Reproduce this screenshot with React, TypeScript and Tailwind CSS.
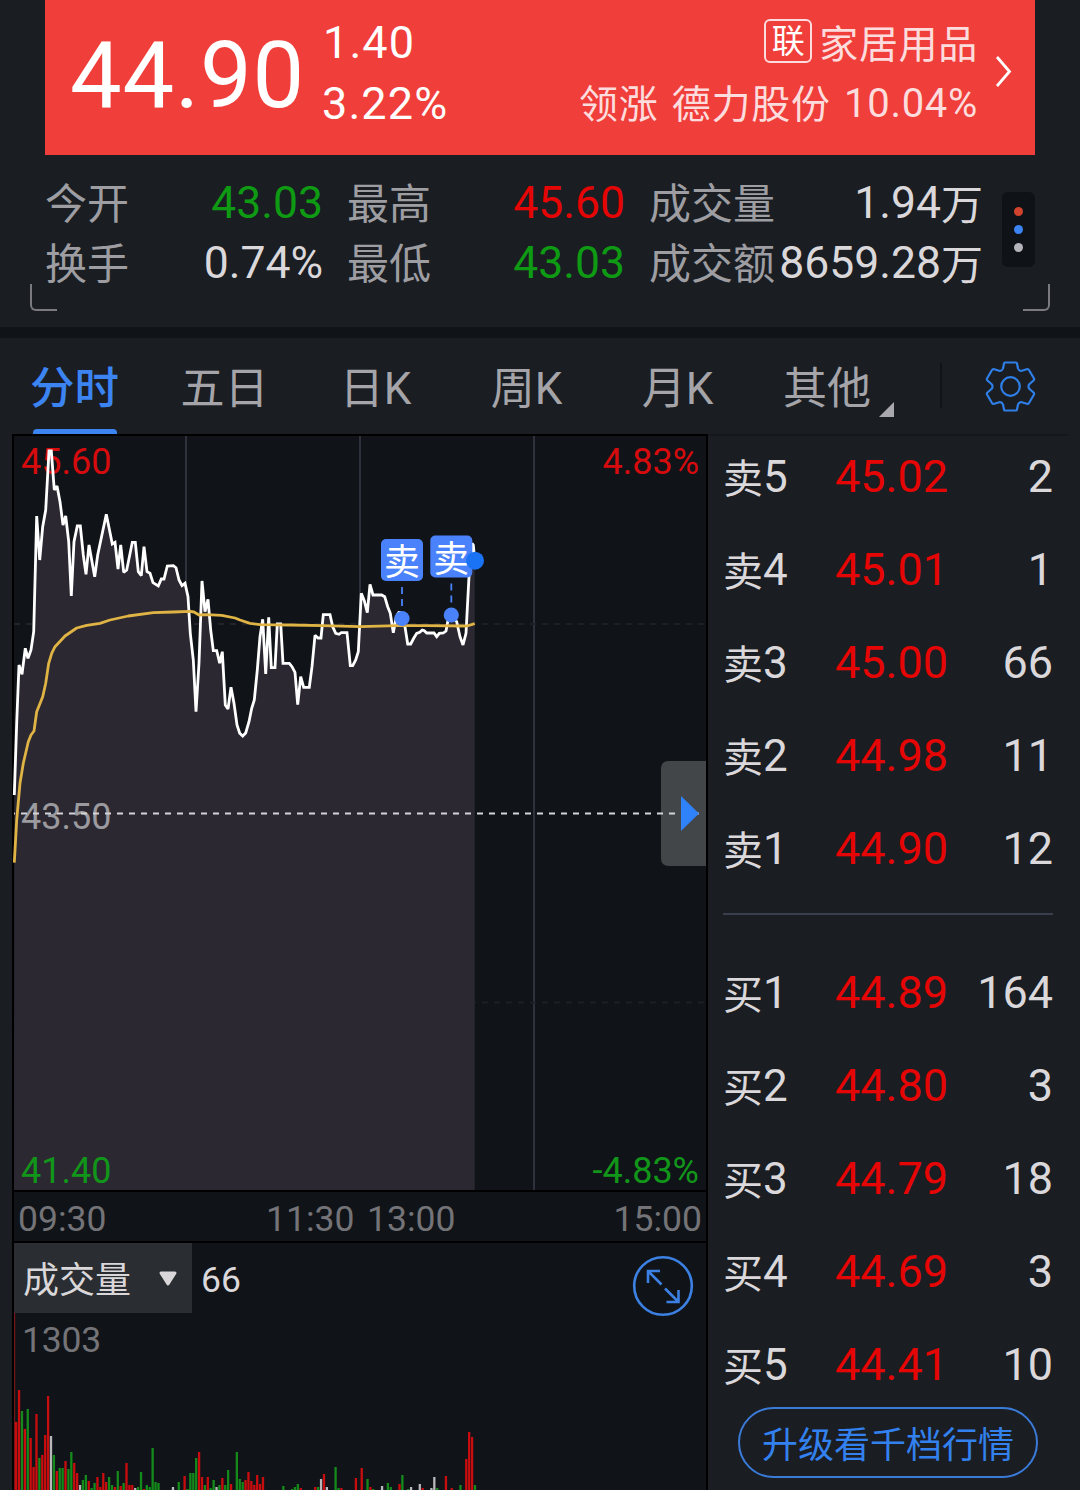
type Level = { label: string; level: number; price: string; volume: string }

const sells: Level[] = [
  { label: '卖', level: 5, price: '45.02', volume: '2' },
  { label: '卖', level: 4, price: '45.01', volume: '1' },
  { label: '卖', level: 3, price: '45.00', volume: '66' },
  { label: '卖', level: 2, price: '44.98', volume: '11' },
  { label: '卖', level: 1, price: '44.90', volume: '12' },
]

const buys: Level[] = [
  { label: '买', level: 1, price: '44.89', volume: '164' },
  { label: '买', level: 2, price: '44.80', volume: '3' },
  { label: '买', level: 3, price: '44.79', volume: '18' },
  { label: '买', level: 4, price: '44.69', volume: '3' },
  { label: '买', level: 5, price: '44.41', volume: '10' },
]

const stats = [
  { label: '今开', value: '43.03', color: 'text-[#0f9a14]' },
  { label: '最高', value: '45.60', color: 'text-[#e60505]' },
  { label: '成交量', value: '1.94', unit: '万', color: 'text-[#dad8da]' },
  { label: '换手', value: '0.74%', color: 'text-[#dad8da]' },
  { label: '最低', value: '43.03', color: 'text-[#0f9a14]' },
  { label: '成交额', value: '8659.28', unit: '万', color: 'text-[#dad8da]' },
]

const tabs = ['五日', '日K', '周K', '月K']

const priceLine =
  '14.3,795 16.7,723 19,665 22,674.3 25.3,648.3 28,658.3 31,650 33.7,631.7 36.7,516 39.7,560 42.7,526.7 45.7,510 49,451 51.3,451 54.3,490 57,486 60,501.7 63,525 65.7,516 68.7,541.7 71.3,596 74,541.7 77.3,526 80.3,526 83.3,555 86,574.3 89,545 94.7,576.7 97.7,555 106.3,514.3 112.3,544 115,542.3 118,569 120.7,545 123.7,572.3 126.7,570 132.3,542.3 135.3,542.3 138.3,571.7 141.3,575.7 144,546.7 147,571.7 150,573.3 153,582.7 158.3,586 161.3,579 164,579 167.3,566 173.3,565.7 176,567.7 179,580 182,585.7 185,583.3 188,596.7 190.3,633.3 193.3,660 196,711.7 199,663.3 202,581 205,611.7 208,599.3 210.7,630 213.3,650.7 216.7,650.7 219.7,663.3 222.3,651.7 225.3,705 228,709 231,687.3 234,703.3 237,725 239.7,733.3 242.7,736 245.7,733 249,721.7 251.7,708.3 254.3,700 257.3,670 260,636.7 262.7,619.3 265.7,674 268.7,617.3 271.3,667.7 275,667.7 277.3,624 280.7,624 283,663.3 289.3,663.3 292,666.7 295,672.3 297.7,704.7 300.7,676.7 303.7,687.3 309.3,687.3 312,666.7 315,635.3 318,638 321,638 323.3,614.7 330,614.7 332.7,626.7 335.7,633.3 339,634.3 341.3,632.7 347,632.7 350.3,665.7 352.7,665.7 355.7,660 358.3,651.7 361.3,593.3 364.3,600.7 367.3,612.7 370,584.3 373,595 381.7,595 384.7,596.7 387.7,606.7 390.3,613.3 393.3,632.7 396.3,616.7 399.3,611.7 402,617.3 405,626.7 407.7,644 410.7,644 413.7,638.3 416.7,633.3 419.7,632.3 422.3,630 424.3,630.7 426.7,633 434,633 436.7,636.7 439.3,633.3 443.3,633 446,631 449,615 451.3,613.3 456.7,621.7 460,636.7 463,645 466,633.3 469,576.7 472,543.3 473.3,545 474.7,560'

const averageLine =
  '14.3,862.7 16.7,820 20,783.3 23.3,763.3 28.3,741.7 31,735 34,731 36.7,711.7 42.7,696.7 45.7,683.3 48.7,663.3 51.7,653.3 55,646.7 65,636 76.7,628 86.7,625.3 100,623.3 110,620 128.3,616 153.3,612.7 173.3,612 190,611.3 194,612 199,615 206.7,614.7 221.7,615.3 235,618 240,620 250,623.3 260,624.7 290,625 323,625.7 360,626.7 397,625.7 427,625.7 467,626 474.7,623.7'

const barColors = { r: '#c90c0e', g: '#148a1a', w: '#b9b7ba' }

// minute index, height, colour
const bars: [number, number, 'r' | 'g' | 'w'][] = [
  [0, 68, 'r'], [1, 100, 'r'], [2, 79, 'g'], [3, 61, 'r'], [4, 81, 'g'], [5, 52, 'r'], [6, 23, 'r'], [7, 76, 'r'],
  [8, 32, 'g'], [9, 35, 'r'], [10, 55, 'r'], [11, 94, 'r'], [12, 54, 'w'], [13, 35, 'g'], [14, 19, 'r'], [15, 22, 'g'],
  [16, 22, 'g'], [17, 29, 'r'], [18, 21, 'g'], [19, 38, 'g'], [20, 27, 'r'], [21, 17, 'r'], [22, 5, 'w'], [23, 10, 'g'],
  [24, 15, 'g'], [25, 9, 'r'], [26, 2, 'g'], [27, 7, 'g'], [28, 13, 'r'], [29, 3, 'r'], [30, 17, 'r'], [31, 8, 'r'],
  [32, 13, 'g'], [33, 5, 'g'], [34, 3, 'r'], [35, 19, 'g'], [36, 4, 'r'], [37, 7, 'g'], [38, 27, 'r'], [39, 5, 'r'],
  [40, 5, 'r'], [41, 2, 'w'], [42, 3, 'g'], [43, 18, 'g'], [44, 1, 'r'], [45, 5, 'g'], [46, 3, 'g'], [47, 42, 'g'],
  [48, 8, 'g'], [49, 7, 'g'], [54, 3, 'w'], [56, 8, 'g'], [58, 14, 'r'], [59, 1, 'g'], [60, 17, 'g'], [61, 17, 'g'],
  [62, 32, 'g'], [63, 38, 'r'], [64, 13, 'r'], [65, 5, 'g'], [66, 13, 'r'], [67, 2, 'g'], [68, 10, 'g'], [69, 3, 'w'],
  [70, 5, 'g'], [71, 12, 'r'], [72, 5, 'g'], [73, 20, 'g'], [74, 6, 'r'], [76, 38, 'g'], [77, 11, 'g'], [78, 8, 'g'],
  [79, 10, 'r'], [80, 18, 'r'], [81, 9, 'r'], [82, 5, 'r'], [83, 15, 'r'], [84, 6, 'r'], [85, 13, 'r'], [92, 4, 'g'],
  [95, 1, 'g'], [96, 3, 'g'], [97, 6, 'g'], [98, 2, 'r'], [103, 3, 'r'], [104, 3, 'g'], [105, 11, 'w'], [106, 16, 'r'],
  [107, 3, 'w'], [110, 23, 'g'], [111, 2, 'g'], [112, 2, 'r'], [117, 12, 'r'], [119, 22, 'r'], [121, 11, 'g'],
  [122, 3, 'r'], [123, 1, 'g'], [126, 4, 'w'], [128, 7, 'g'], [129, 3, 'g'], [132, 6, 'r'], [133, 15, 'g'],
  [135, 1, 'g'], [136, 3, 'w'], [139, 6, 'w'], [140, 2, 'r'], [143, 2, 'w'], [144, 13, 'w'], [145, 2, 'g'],
  [148, 14, 'r'], [150, 2, 'r'], [153, 5, 'g'], [155, 31, 'r'], [156, 58, 'r'], [157, 53, 'r'], [158, 5, 'g'],
]

function QuoteHeader() {
  return (
    <div className="mx-[45px] flex h-[155px] bg-[#f03e3b] text-white">
      <div className="ml-[25px] w-[252px] text-[92px] leading-[151px] tracking-[0.8px]">44.90</div>
      <div className="pt-[13px] text-[45px] leading-[60px] tracking-[1.1px]">
        <div className="pl-px">1.40</div>
        <div className="pt-px">3.22%</div>
      </div>
      <div className="ml-auto flex flex-col items-end pt-[15px] text-[39px] leading-[60px] tracking-[0.7px] text-[#fcdcdc]">
        <div className="flex items-center">
          <span className="mr-[7px] mt-[-9px] flex h-[44px] w-[48px] items-center justify-center rounded-md border-2 border-[#fcdcdc] pt-[2px] text-[33px] leading-none tracking-normal text-white">
            联
          </span>
          家居用品
        </div>
        <div className="[word-spacing:3px]">
          领涨 德力股份 <span className="align-[1px] text-[40px] leading-none">10.04%</span>
        </div>
      </div>
      <svg className="ml-[17px] mr-[23px] mt-[55px] h-[33px] w-[17px]" viewBox="0 0 17 33" fill="none" stroke="#fff" strokeWidth="2.8">
        <path d="M2 2 L14.5 16.5 L2 31" />
      </svg>
    </div>
  )
}

function Stats() {
  return (
    <div className="relative h-[172px] pl-[45px] pt-[18px]">
      <div className="flex">
        <div className="grid auto-rows-[60px] grid-cols-[278px_278px_334px] gap-x-6 text-[44.5px] leading-[60px]">
          {stats.map((item) => (
            <div key={item.label} className="flex justify-between whitespace-nowrap">
              <span className="pt-[2px] text-[42px] text-[#9d9da2]">{item.label}</span>
              <span className={item.color}>
                {item.value}
                {item.unit && <span className="align-[-2px] text-[42px] leading-none">{item.unit}</span>}
              </span>
            </div>
          ))}
        </div>
        <div className="ml-[19px] mt-[19px] flex h-[75px] w-[33px] flex-col items-center justify-center gap-[9px] rounded-md bg-[#0f1216]">
          <i className="size-[9px] rounded-full bg-[#d2432e]" />
          <i className="size-[9px] rounded-full bg-[#3b84f2]" />
          <i className="size-[9px] rounded-full bg-[#b5b3bb]" />
        </div>
      </div>
      <i className="absolute bottom-[16px] left-[30px] h-[27px] w-[27px] rounded-bl-md border-b-[2.5px] border-l-[2.5px] border-[#7b7a7e]" />
      <i className="absolute bottom-[16px] right-[30px] h-[27px] w-[27px] rounded-br-md border-b-[2.5px] border-r-[2.5px] border-[#7b7a7e]" />
    </div>
  )
}

function Tabs() {
  return (
    <div className="flex h-[96px] text-[44px] leading-[102px] text-[#a4a4a9]">
      <div className="flex w-[149px] flex-col items-center text-[44.5px] font-medium text-[#3b84f2]">
        <span className="h-[91px]">分时</span>
        <i className="h-[5px] w-[84px] rounded-t-sm bg-[#3b84f2]" />
      </div>
      {tabs.map((tab) => (
        <div key={tab} className="w-[151px] text-center">
          {tab}
        </div>
      ))}
      <div className="flex w-[151px] pl-[30px]">
        其他
        <svg className="ml-[8px] mt-[64px] size-[15px]" viewBox="0 0 15 15">
          <path d="M15 0 V15 H0 Z" fill="#a9a9ad" />
        </svg>
      </div>
      <i className="ml-[36px] mt-[25px] h-[45px] w-[2px] bg-[#101317]" />
      <svg
        className="ml-[43px] mt-[23px] h-[51px] w-[51px]"
        viewBox="-25.5 -25.5 51 51"
        fill="none"
        stroke="#2f7fe8"
        strokeWidth="2.2"
        strokeLinejoin="round"
      >
        <circle r="9.3" />
        <path d="M-5.5 -24 H5.5 Q6.3 -24 6.5 -23 L7.5 -18 Q8.2 -16 10.5 -15.5 L17 -17.5 Q18 -17.5 18.5 -16.5 L23.5 -8 Q24 -7 23 -6 L18.5 -2 Q17.5 0 18.5 2 L23 6 Q24 7 23.5 8 L18.5 16.5 Q18 17.5 17 17.5 L10.5 15.5 Q8.2 16 7.5 18 L6.5 23 Q6.3 24 5.5 24 H-5.5 Q-6.3 24 -6.5 23 L-7.5 18 Q-8.2 16 -10.5 15.5 L-17 17.5 Q-18 17.5 -18.5 16.5 L-23.5 8 Q-24 7 -23 6 L-18.5 2 Q-17.5 0 -18.5 -2 L-23 -6 Q-24 -7 -23.5 -8 L-18.5 -16.5 Q-18 -17.5 -17 -17.5 L-10.5 -15.5 Q-8.2 -16 -7.5 -18 L-6.5 -23 Q-6.3 -24 -5.5 -24 Z" />
      </svg>
    </div>
  )
}

function SellMarker({ x, y, dotY }: { x: number; y: number; dotY: number }) {
  return (
    <g>
      <rect x={x - 21} y={y} width="42" height="42" rx="5" fill="#4a82fb" />
      <text x={x} y={y + 36} fontSize="36" textAnchor="middle" fill="#fff">
        卖
      </text>
      <path d={`M${x} ${y + 48} V${dotY - 8}`} stroke="#4a82fb" strokeWidth="1.8" strokeDasharray="7 5" />
      <circle cx={x} cy={dotY} r="7.6" fill="#4a82fb" />
    </g>
  )
}

function PriceChart() {
  return (
    <svg className="block h-[754px] w-[692px] overflow-visible" viewBox="14 436 692 754" fill="none" fontSize="36">
      <path d="M186 436 V1190 M360 436 V1190 M534 436 V1190" stroke="#2e313b" strokeWidth="2" />
      <path d="M14 624 H706 M14 1002.500 H706" stroke="#1d1f23" strokeWidth="2" strokeDasharray="6 6" />
      <polygon points={`14,1190 ${priceLine} 474.7,1190`} fill="#2b2832" />
      <path d="M14 624 H474" stroke="#302b32" strokeWidth="2" strokeDasharray="6 6" opacity="0.4" />
      <text x="21" y="473.500" fill="#d60b0e">45.60</text>
      <text x="699" y="473.500" fill="#d60b0e" textAnchor="end">4.83%</text>
      <text x="21" y="828.500" fill="#9b9a9e">43.50</text>
      <text x="21" y="1182.500" fill="#11961a">41.40</text>
      <text x="699" y="1182.500" fill="#11961a" textAnchor="end">-4.83%</text>
      <path d="M661 769 Q661 761 669 761 H706 V866 H669 Q661 866 661 858 Z" fill="#434649" />
      <path d="M14 813.500 H703" stroke="#d4d3d6" strokeWidth="2" strokeDasharray="6 6" strokeDashoffset="5" />
      <path d="M681 796 V831 L699 813.500 Z" fill="#2f82f7" />
      <polyline points={priceLine} stroke="#fff" strokeWidth="2.8" strokeLinejoin="miter" strokeMiterlimit="2" />
      <polyline points={averageLine} stroke="#dfb445" strokeWidth="2.8" strokeLinejoin="round" />
      <SellMarker x={402} y={539} dotY={618.5} />
      <SellMarker x={451.3} y={535.5} dotY={615} />
      <circle cx="475" cy="560.700" r="9" fill="#1a73f5" />
    </svg>
  )
}

function TimeAxis() {
  return (
    <div className="flex h-[49px] px-[4px] text-[35.5px] leading-[55px] text-[#747377]">
      <span className="w-[248px]">09:30</span>
      <span className="w-[101px]">11:30</span>
      <span>13:00</span>
      <span className="ml-auto">15:00</span>
    </div>
  )
}

function VolumeChart() {
  return (
    <div className="relative h-[247px]">
      <div className="flex h-[70px] items-start">
        <div className="flex h-[70px] w-[178px] items-center bg-[#2a2d31] pl-[9px] text-[36px] leading-[70px] text-[#d9d7d9]">
          <span className="pt-[6px]">成交量</span>
          <svg className="ml-[27px] h-[17px] w-[20px]" viewBox="0 0 20 17">
            <path d="M3 3 H17 L10 14 Z" fill="#d9d7d9" stroke="#d9d7d9" strokeWidth="3" strokeLinejoin="round" />
          </svg>
        </div>
        <span className="ml-[9px] text-[35.5px] leading-[75px] text-[#dad8da]">66</span>
        <svg className="ml-auto mr-[12px] mt-[12px] size-[62px]" viewBox="-31 -31 62 62" fill="none" stroke="#3b80e2" strokeWidth="2.6">
          <circle r="28.8" />
          <path d="M-3 -15 H-15 V-3 M-15 -15 L-1.500 -1.500 M3.500 16 H15.500 V4 M15.500 16 L2 2.500" />
        </svg>
      </div>
      <div className="pl-[8px] text-[35.5px] leading-[54px] tracking-[-0.2px] text-[#747377]">1303</div>
      <svg className="absolute left-0 top-[70px] h-[177px] w-[692px]" viewBox="14 1313 692 177">
        <rect x="14" y="1313" width="1.2" height="177" fill="#74151a" />
        {bars.map(([i, height, color]) => (
          <rect key={i} x={15 + i * 2.904} y={1490 - height} width="2.3" height={height} fill={barColors[color]} />
        ))}
      </svg>
    </div>
  )
}

function LevelRow({ row }: { row: Level }) {
  return (
    <div className="flex h-[93px] text-[45px] leading-[93px] text-[#dad8da]">
      <span className="w-[112px] pt-px text-[44px]">
        <span className="align-[-1px] text-[40px] leading-none">{row.label}</span>
        {row.level}
      </span>
      <span className="text-[#e60505]">{row.price}</span>
      <span className="ml-auto">{row.volume}</span>
    </div>
  )
}

function OrderBook() {
  return (
    <div className="mr-[12px] flex-1 border-t-2 border-[#14171b] pl-[15px] pr-[15px]">
      <div className="mt-[-6px]">
        {sells.map((row) => (
          <LevelRow key={row.level} row={row} />
        ))}
      </div>
      <div className="mt-[18px] h-[2px] bg-[#3a3f4d]" />
      <div className="mt-[31px]">
        {buys.map((row) => (
          <LevelRow key={row.level} row={row} />
        ))}
      </div>
      <button className="ml-[15px] mt-[-4px] block h-[71px] w-[300px] rounded-full border-2 border-[#3a7bd8] pt-[4px] text-[36px] leading-[67px] text-[#3381ee]">
        升级看千档行情
      </button>
    </div>
  )
}

export default function App() {
  return (
    <div className="h-[1490px] w-[1080px] overflow-hidden bg-[#1a1d22] font-[Roboto,'Noto_Sans_CJK_SC',sans-serif]">
      <QuoteHeader />
      <Stats />
      <div className="h-[11px] bg-[#101318]" />
      <Tabs />
      <div className="flex h-[1056px]">
        <div className="ml-[12px] w-[696px] border-x-2 border-t-2 border-black bg-[#101418]">
          <PriceChart />
          <div className="border-y-2 border-black">
            <TimeAxis />
          </div>
          <VolumeChart />
        </div>
        <OrderBook />
      </div>
    </div>
  )
}
